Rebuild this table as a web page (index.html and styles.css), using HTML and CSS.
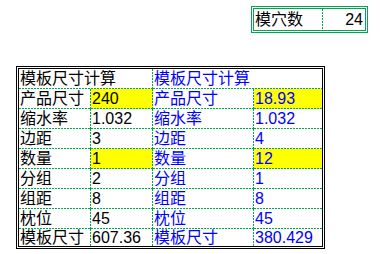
FILE: index.html
```html
<!DOCTYPE html>
<html lang="zh-CN">
<head>
<meta charset="utf-8">
<title>模板尺寸计算</title>
<link rel="stylesheet" href="styles.css">
</head>
<body>
<div class="cavity">
  <div class="cc sep">模穴数</div>
  <div class="cc num">24</div>
</div>
<div class="calc">
  <div class="c span2">模板尺寸计算</div>
  <div class="c span2 blue end">模板尺寸计算</div>

  <div class="c">产品尺寸</div>
  <div class="c hl">240</div>
  <div class="c blue">产品尺寸</div>
  <div class="c blue hl end">18.93</div>

  <div class="c">缩水率</div>
  <div class="c">1.032</div>
  <div class="c blue">缩水率</div>
  <div class="c blue end">1.032</div>

  <div class="c">边距</div>
  <div class="c">3</div>
  <div class="c blue">边距</div>
  <div class="c blue end">4</div>

  <div class="c">数量</div>
  <div class="c hl">1</div>
  <div class="c blue">数量</div>
  <div class="c blue hl end">12</div>

  <div class="c">分组</div>
  <div class="c">2</div>
  <div class="c blue">分组</div>
  <div class="c blue end">1</div>

  <div class="c">组距</div>
  <div class="c">8</div>
  <div class="c blue">组距</div>
  <div class="c blue end">8</div>

  <div class="c">枕位</div>
  <div class="c">45</div>
  <div class="c blue">枕位</div>
  <div class="c blue end">45</div>

  <div class="c last">模板尺寸</div>
  <div class="c last">607.36</div>
  <div class="c blue last">模板尺寸</div>
  <div class="c blue end last">380.429</div>
</div>
</body>
</html>
```
FILE: styles.css
```css
html, body {
  margin: 0;
  padding: 0;
  background: #fff;
}

body {
  font-family: "Liberation Sans", "Noto Sans CJK SC", sans-serif;
  font-size: 16px;
  color: #000;
}

.cavity {
  display: grid;
  grid-template-columns: 69px 42px;
  grid-template-rows: 21px;
  width: max-content;
  margin: 6px 0 0 251px;
  border: 3px double #00a650;
}

.cc {
  box-sizing: border-box;
  display: flex;
  align-items: center;
  line-height: 16px;
  padding-left: 1px;
  white-space: nowrap;
}

.cc.sep {
  border-right: 1px solid transparent;
  background-origin: border-box;
  background-image: repeating-linear-gradient(to bottom, #00a650 0 2px, transparent 2px 3px);
  background-position: right top;
  background-size: 1px 100%;
  background-repeat: no-repeat;
}

.cc.num {
  justify-content: flex-end;
  padding-right: 2px;
}

.calc {
  display: grid;
  grid-template-columns: 72px 62px 101px 68px;
  grid-template-rows: repeat(8, 20px) 17px;
  width: max-content;
  margin: 33px 0 0 16px;
  border: 3px double #000;
}

.c {
  box-sizing: border-box;
  display: flex;
  align-items: center;
  line-height: 16px;
  padding-left: 1px;
  white-space: nowrap;
  overflow: hidden;
  border-right: 1px solid transparent;
  border-bottom: 1px solid transparent;
  background-origin: border-box;
  background-clip: border-box;
  background-image:
    repeating-linear-gradient(to right, #00a650 0 2px, transparent 2px 3px),
    repeating-linear-gradient(to bottom, #00a650 0 2px, transparent 2px 3px);
  background-position: left bottom, right top;
  background-size: 100% 1px, 1px 100%;
  background-repeat: no-repeat, no-repeat;
}

.c.span2 {
  grid-column: span 2;
}

.c.end {
  border-right: none;
  background-image: repeating-linear-gradient(to right, #00a650 0 2px, transparent 2px 3px);
  background-position: left bottom;
  background-size: 100% 1px;
}

.c.last {
  border-bottom: none;
  background-image: repeating-linear-gradient(to bottom, #00a650 0 2px, transparent 2px 3px);
  background-position: right top;
  background-size: 1px 100%;
}

.c.end.last {
  background-image: none;
}

.c.blue {
  color: #0000ff;
}

.c.hl {
  background-color: #ffff00;
}
```
